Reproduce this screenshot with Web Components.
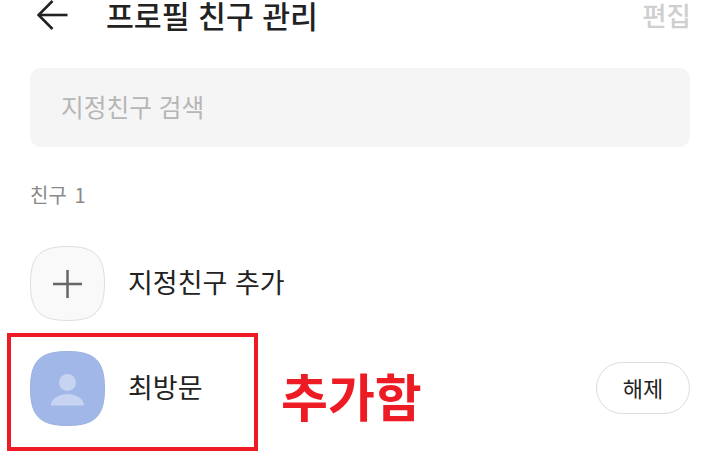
<!DOCTYPE html>
<html lang="ko">
<head>
<meta charset="utf-8">
<title>프로필 친구 관리</title>
<style>
  html, body { margin: 0; padding: 0; background: #fff; }
  body { font-family: "Noto Sans CJK KR", "Noto Sans", sans-serif; }
</style>
</head>
<body>
<friend-screen>
  <top-bar title="프로필 친구 관리" action="편집"></top-bar>
  <search-box placeholder="지정친구 검색"></search-box>
  <section-label>친구 1</section-label>
  <friend-row>
    <squircle-icon slot="icon" kind="add"></squircle-icon>
    지정친구 추가
  </friend-row>
  <friend-row class="added">
    <squircle-icon slot="icon" kind="person"></squircle-icon>
    최방문
    <pill-button slot="action">해제</pill-button>
  </friend-row>
  <note-mark slot="overlay" label="추가함"></note-mark>
</friend-screen>

<script>
// outer page column
class FriendScreen extends HTMLElement{
  constructor(){
    super();
    this.attachShadow({mode: "open"})
  }
  connectedCallback(){
    this.shadowRoot.innerHTML = `
    <style>
      :host{
        display: block;
        position: relative;
        width: 720px;
        height: 453px;
        overflow: hidden;
        box-sizing: border-box;
        padding: 0 30px;
        background: #fff;
      }
    </style>
    <slot></slot>
    <slot name="overlay"></slot>
    `;
  }
}

class TopBar extends HTMLElement{
  constructor(){
    super();
    this.attachShadow({mode: "open"})
  }
  connectedCallback(){
    this.shadowRoot.innerHTML = `
    <style>
      :host{
        display: flex;
        align-items: center;
        height: 30px;
        margin-bottom: 38px;
        font-family: "Liberation Sans", "Noto Sans CJK KR", sans-serif;
      }
      svg{
        display: block;
        width: 32px;
        height: 30px;
        margin-left: 7px;
        flex: none;
      }
      h1{
        margin: 5px 0 0 37px;
        font-size: 30.300px;
        font-weight: 500;
        line-height: 30px;
        color: #222;
        flex: 1;
      }
      span{
        margin: 4px -1px 0 0;
        font-size: 26.500px;
        font-weight: 500;
        line-height: 30px;
        color: #cfcfcf;
      }
    </style>
    <svg viewBox="0 0 32 30" fill="none" stroke="#222" stroke-width="2.600">
      <path d="M1.500 15H30.500"/>
      <path d="M15.500 1L1.500 15L15.500 29"/>
    </svg>
    <h1>${this.getAttribute("title")}</h1>
    <span>${this.getAttribute("action")}</span>
    `;
  }
}

class SearchBox extends HTMLElement{
  constructor(){
    super();
    this.attachShadow({mode: "open"})
  }
  connectedCallback(){
    this.shadowRoot.innerHTML = `
    <style>
      :host{
        display: flex;
        align-items: center;
        height: 79px;
        box-sizing: border-box;
        padding: 0 0 4px 31px;
        border-radius: 11px;
        background: #f5f5f5;
        font-size: 24.700px;
        color: #b6b6b6;
      }
    </style>
    <span>${this.getAttribute("placeholder")}</span>
    `;
  }
}

class SectionLabel extends HTMLElement{
  constructor(){
    super();
    this.attachShadow({mode: "open"})
    this.shadowRoot.innerHTML = `
    <style>
      :host{
        display: block;
        margin-top: 33px;
        height: 30px;
        margin-bottom: 36px;
        line-height: 30px;
        font-size: 20px;
        word-spacing: 2px;
        color: #8a8a8a;
      }
    </style>
    <slot></slot>
    `;
  }
}

class FriendRow extends HTMLElement{
  constructor(){
    super();
    this.attachShadow({mode: "open"})
    this.shadowRoot.innerHTML = `
    <style>
      :host{
        display: flex;
        align-items: center;
        gap: 24px;
        height: 75px;
        margin-bottom: 30px;
        font-size: 27px;
        color: #222;
      }
      .name{
        flex: 1;
        margin: -5px 0 0 -1px;
      }
    </style>
    <slot name="icon"></slot>
    <div class="name"><slot></slot></div>
    <slot name="action"></slot>
    `;
  }
}

class SquircleIcon extends HTMLElement{
  constructor(){
    super();
    this.attachShadow({mode: "open"})
  }
  connectedCallback(){
    const person = this.getAttribute("kind") === "person";
    const shape = "M37.500 .500C65 .500 74.500 10 74.500 37.500S65 74.500 37.500 74.500S.500 65 .500 37.500S10 .500 37.500 .500Z";
    this.shadowRoot.innerHTML = `
    <style>
      :host{
        display: block;
        width: 75px;
        height: 75px;
        flex: none;
      }
      svg{
        display: block;
      }
    </style>
    <svg width="75" height="75" viewBox="0 0 75 75">
      ${person ? `
      <path d="${shape}" fill="#a1b7e8" stroke="#9ab0e0"/>
      <circle cx="37.500" cy="31.500" r="8.500" fill="#c6d3f1"/>
      <path d="M21 54.500C21 47 30 43 37.500 43S54 47 54 54.500Z" fill="#c6d3f1"/>
      ` : `
      <path d="${shape}" fill="#f9f9f9" stroke="#dedede"/>
      <path d="M23 38H52M37.500 24V52" stroke="#666" stroke-width="2.500" fill="none"/>
      `}
    </svg>
    `;
  }
}

class PillButton extends HTMLElement{
  constructor(){
    super();
    this.attachShadow({mode: "open"})
    this.shadowRoot.innerHTML = `
    <style>
      :host{
        display: flex;
        align-items: center;
        justify-content: center;
        width: 94px;
        height: 52px;
        margin-bottom: 2px;
        box-sizing: border-box;
        padding-bottom: 2px;
        border: 1px solid #ddd;
        border-radius: 26px;
        font-size: 22px;
        color: #222;
      }
    </style>
    <slot></slot>
    `;
  }
}

// red hand drawn annotation, lies over the list
class NoteMark extends HTMLElement{
  constructor(){
    super();
    this.attachShadow({mode: "open"})
  }
  connectedCallback(){
    this.shadowRoot.innerHTML = `
    <style>
      :host{
        position: absolute;
        left: 7px;
        top: 333px;
      }
      .box{
        width: 251px;
        height: 118px;
        box-sizing: border-box;
        border: 4.500px solid #ed1c24;
      }
      .label{
        position: absolute;
        left: 274px;
        top: 27px;
        font-size: 51px;
        font-weight: 700;
        line-height: 70px;
        white-space: nowrap;
        color: #ed1c24;
      }
    </style>
    <div class="box"></div>
    <div class="label">${this.getAttribute("label")}</div>
    `;
  }
}

customElements.define("friend-screen", FriendScreen);
customElements.define("top-bar", TopBar);
customElements.define("search-box", SearchBox);
customElements.define("section-label", SectionLabel);
customElements.define("friend-row", FriendRow);
customElements.define("squircle-icon", SquircleIcon);
customElements.define("pill-button", PillButton);
customElements.define("note-mark", NoteMark);
</script>
</body>
</html>
